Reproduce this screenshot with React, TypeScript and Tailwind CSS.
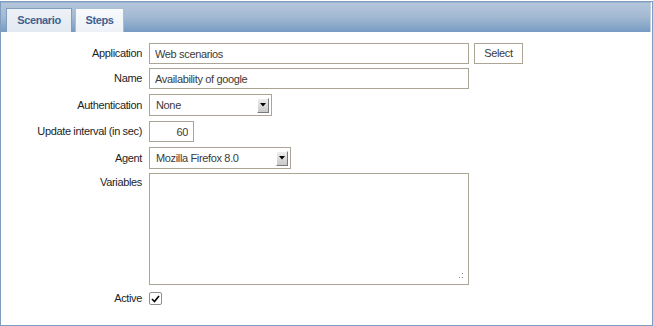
import React from "react";

function Label({ children, top }: { children: React.ReactNode; top?: boolean }) {
  return (
    <div className={"w-[141px] shrink-0 text-right text-[#1e1e1e] " + (top ? "leading-[19px]" : "")}>
      {children}
    </div>
  );
}

function SelectBox({ width, value }: { width: string; value: string }) {
  return (
    <div className={`${width} h-[22px] border border-[#aaa594] bg-white flex items-center justify-between pl-[6px] pr-[2px] text-[#3a3a3a]`}>
      <span>{value}</span>
      <div className="w-[12px] h-[15px] bg-gradient-to-b from-[#eeeeee] to-[#c9c9c9] border-t border-l border-t-[#ffffff] border-l-[#ffffff] border-r border-b border-r-[#7a7a7a] border-b-[#7a7a7a] flex items-center justify-center">
        <svg width="6" height="4" viewBox="0 0 6 4">
          <path d="M0 0 H6 L3 3.5 Z" fill="#000" />
        </svg>
      </div>
    </div>
  );
}

export default function App() {
  const inputCls =
    "h-[21px] border border-[#aaa594] bg-white px-[5px] text-[#3a3a3a] outline-none";
  return (
    <div className="w-[653px] h-[326px] bg-white pt-px font-['Liberation_Sans',Arial,sans-serif] text-[11px] tracking-[-0.35px] overflow-hidden">
      <div className="w-[653px] h-[325px] border border-[#7e9dbf] flex flex-col">
        {/* header with tabs */}
        <div className="h-[30px] mr-[1px] bg-gradient-to-b from-[#b5c6db] via-[#a2b8d2] to-[#769bc3] border-t border-[#9cb3cd] border-r border-r-[#c4d3e4] flex items-end gap-[3px] pl-[5px]">
          <div className="h-[24px] w-[66px] border border-b-0 border-[#7f9dbe] bg-gradient-to-b from-[#eef2f7] to-[#e2e9f1] flex items-center justify-center font-bold text-[#3e6190]">
            Scenario
          </div>
          <div className="h-[24px] w-[49px] border border-b-0 border-[#a9bdd4] bg-gradient-to-b from-[#f8fafc] to-[#eef2f7] flex items-center justify-center font-bold text-[#3e6190]">
            Steps
          </div>
        </div>

        {/* form */}
        <div className="flex-1 bg-white pt-[11px] flex flex-col">
          <div className="flex items-center">
            <Label>Application</Label>
            <div className="ml-[7px] flex items-center gap-[5px]">
              <input readOnly value="Web scenarios" className={`${inputCls} w-[320px]`} />
              <div className="h-[21px] w-[49px] border border-[#aaa594] bg-white flex items-center justify-center text-[#3a3a3a]">
                Select
              </div>
            </div>
          </div>

          <div className="flex items-center mt-[4px]">
            <Label>Name</Label>
            <div className="ml-[7px]">
              <input readOnly value="Availability of google" className={`${inputCls} w-[320px]`} />
            </div>
          </div>

          <div className="flex items-center mt-[5px]">
            <Label>Authentication</Label>
            <div className="ml-[7px]">
              <SelectBox width="w-[123px]" value="None" />
            </div>
          </div>

          <div className="flex items-center mt-[5px]">
            <Label>Update interval (in sec)</Label>
            <div className="ml-[7px]">
              <input readOnly value="60" className={`${inputCls} w-[45px] text-right`} />
            </div>
          </div>

          <div className="flex items-center mt-[5px]">
            <Label>Agent</Label>
            <div className="ml-[7px]">
              <SelectBox width="w-[142px]" value="Mozilla Firefox 8.0" />
            </div>
          </div>

          <div className="flex items-start mt-[4px]">
            <Label top>Variables</Label>
            <div className="ml-[7px] relative">
              <textarea readOnly className="block w-[320px] h-[112px] border border-[#aaa594] bg-white resize-none outline-none" />
              <svg className="absolute right-[5px] bottom-[6px]" width="5" height="6" viewBox="0 0 5 6">
                <rect x="3" y="0" width="1" height="1" fill="#808080" />
                <rect x="0" y="4" width="1" height="1" fill="#808080" />
                <rect x="3" y="4" width="1" height="1" fill="#808080" />
              </svg>
            </div>
          </div>

          <div className="flex items-center h-[17px] mt-[5px]">
            <Label>Active</Label>
            <div className="ml-[7px]">
              <div className="w-[13px] h-[13px] border border-[#8f8f8f] rounded-[2px] bg-white flex items-center justify-center">
                <svg width="9" height="8" viewBox="0 0 9 8">
                  <path d="M1 4 L3.5 6.5 L8 1" stroke="#000" strokeWidth="1.6" fill="none" />
                </svg>
              </div>
            </div>
          </div>
        </div>
      </div>
    </div>
  );
}
